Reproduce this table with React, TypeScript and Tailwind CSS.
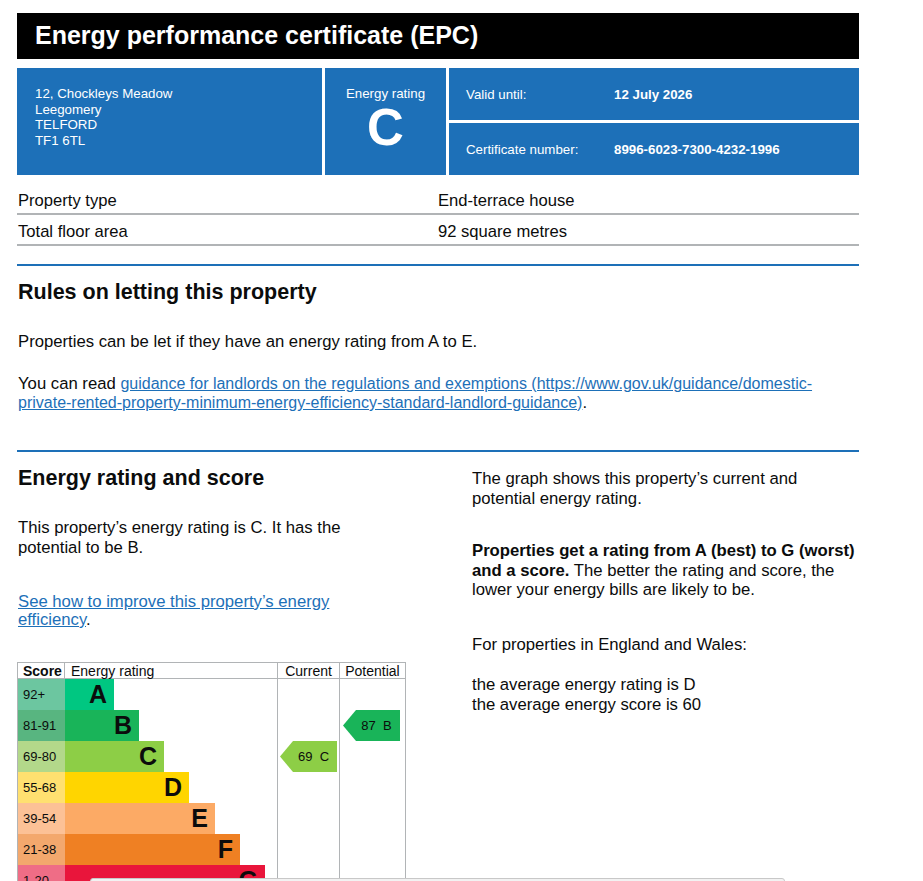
const font = { fontFamily: '"Liberation Sans", Arial, sans-serif' };

const bands = [
  { score: '92+', letter: 'A', bar: 'bg-[#00c781]', cell: 'bg-[#6cc6a0]', w: 'w-[49px]' },
  { score: '81-91', letter: 'B', bar: 'bg-[#19b459]', cell: 'bg-[#58b580]', w: 'w-[74px]' },
  { score: '69-80', letter: 'C', bar: 'bg-[#8dce46]', cell: 'bg-[#b3d88a]', w: 'w-[99px]' },
  { score: '55-68', letter: 'D', bar: 'bg-[#ffd500]', cell: 'bg-[#ffe070]', w: 'w-[124px]' },
  { score: '39-54', letter: 'E', bar: 'bg-[#fcaa65]', cell: 'bg-[#fcc196]', w: 'w-[150px]' },
  { score: '21-38', letter: 'F', bar: 'bg-[#ef8023]', cell: 'bg-[#f3a86d]', w: 'w-[175px]' },
  { score: '1-20', letter: 'G', bar: 'bg-[#e9153b]', cell: 'bg-[#ef6d86]', w: 'w-[200px]' },
];

function Arrow({ label, color }: { label: string; color: string }) {
  return (
    <div
      className={`flex h-[31px] w-[57px] items-center justify-center whitespace-pre pl-[10px] text-[13px] text-[#0b0c0c] [clip-path:polygon(13px_0,100%_0,100%_100%,13px_100%,0_50%)] ${color}`}
    >
      {label}
    </div>
  );
}

function RatingChart() {
  return (
    <div className="w-[389px] border border-[#b1b4b6] text-[#0b0c0c]">
      {/* header */}
      <div className="flex h-[16px] border-b border-[#b1b4b6] text-[14px] leading-[16px]">
        <div className="w-[47px] border-r border-[#b1b4b6] pl-[5px] font-bold">Score</div>
        <div className="w-[213px] border-r border-[#b1b4b6] pl-[6px]">Energy rating</div>
        <div className="w-[62px] border-r border-[#b1b4b6] text-center">Current</div>
        <div className="flex-1 text-center">Potential</div>
      </div>
      <div className="flex">
        <div className="w-[260px] border-r border-[#b1b4b6]">
          {bands.map((b) => (
            <div key={b.letter} className="flex h-[31px]">
              <div className={`flex w-[47px] items-center pl-[5px] text-[13px] ${b.cell}`}>{b.score}</div>
              <div
                className={`flex items-center justify-end pr-[7px] text-[25px] font-bold leading-none ${b.bar} ${b.w}`}
              >
                {b.letter}
              </div>
            </div>
          ))}
        </div>
        <div className="w-[62px] border-r border-[#b1b4b6] pt-[62px] pl-[2px]">
          <Arrow label="69  C" color="bg-[#8dce46]" />
        </div>
        <div className="flex-1 pt-[31px] pl-[3px]">
          <Arrow label="87  B" color="bg-[#19b459]" />
        </div>
      </div>
    </div>
  );
}

export default function App() {
  return (
    <div className="min-h-[1200px] bg-white text-[#0b0c0c]" style={font}>
      <div className="ml-[17px] w-[842px] pt-[13px]">
        {/* title bar */}
        <div className="flex h-[46px] items-center bg-black pl-[18px] text-[25px] font-bold text-white">
          Energy performance certificate (EPC)
        </div>

        {/* blue summary */}
        <div className="mt-[9px] flex h-[107px] gap-[3px] text-white">
          <div className="w-[305px] bg-[#1d70b8] pl-[18px] pt-[18px] text-[13.3px] leading-[15.5px]">
            <div>12, Chockleys Meadow</div>
            <div>Leegomery</div>
            <div>TELFORD</div>
            <div>TF1 6TL</div>
          </div>
          <div className="flex w-[121px] flex-col items-center bg-[#1d70b8] pt-[18px]">
            <div className="text-[13.3px] leading-[15px]">Energy rating</div>
            <div className="mt-[2px] text-[51px] font-bold leading-[50px]">C</div>
          </div>
          <div className="flex flex-1 flex-col gap-[3px]">
            <div className="flex flex-1 items-center bg-[#1d70b8] pl-[17px] pt-[2px] text-[13.3px]">
              <span className="w-[148px]">Valid until:</span>
              <span className="font-bold">12 July 2026</span>
            </div>
            <div className="flex flex-1 items-center bg-[#1d70b8] pl-[17px] pt-[2px] text-[13.3px]">
              <span className="w-[148px]">Certificate number:</span>
              <span className="font-bold">8996-6023-7300-4232-1996</span>
            </div>
          </div>
        </div>

        {/* property facts */}
        <div className="mt-[9px] text-[16.6px]">
          <div className="flex border-b-2 border-[#b1b4b6] pt-[7px] pb-[2px] leading-[20px]">
            <span className="w-[421px] pl-[1px]">Property type</span>
            <span>End-terrace house</span>
          </div>
          <div className="flex border-b-2 border-[#b1b4b6] pt-[7px] pb-[2px] leading-[20px]">
            <span className="w-[421px] pl-[1px]">Total floor area</span>
            <span>92 square metres</span>
          </div>
        </div>

        {/* rules on letting */}
        <div className="mt-[18px] border-t-2 border-[#1d70b8] pl-[1px]">
          <h2 className="mt-[14px] text-[21.5px] font-bold leading-[24px]">Rules on letting this property</h2>
          <p className="mt-[28px] text-[16.7px] leading-[19px]">
            Properties can be let if they have an energy rating from A to E.
          </p>
          <p className="mt-[23px] text-[16.7px] leading-[19px]">
            You can read{' '}
            <a className="text-[16px] text-[#1d70b8] underline" href="#">
              guidance for landlords on the regulations and exemptions (https://www.gov.uk/guidance/domestic-private-rented-property-minimum-energy-efficiency-standard-landlord-guidance)
            </a>
            .
          </p>
        </div>

        {/* energy rating and score */}
        <div className="mt-[38px] flex border-t-2 border-[#1d70b8]">
          <div className="w-[455px]">
            <div className="w-[360px] pl-[1px]">
              <h2 className="mt-[14px] text-[21.5px] font-bold leading-[24px]">Energy rating and score</h2>
              <p className="mt-[28px] text-[16.7px] leading-[20px]">
                This property’s energy rating is C. It has the potential to be B.
              </p>
              <p className="mt-[35px] text-[16.7px] leading-[18px]">
                <a className="text-[#1d70b8] underline" href="#">
                  See how to improve this property’s energy efficiency
                </a>
                .
              </p>
            </div>
            <div className="mt-[33px]">
              <RatingChart />
            </div>
          </div>
          <div className="flex-1 text-[16.7px] leading-[19.5px]">
            <p className="mt-[17px]">The graph shows this property’s current and potential energy rating.</p>
            <p className="mt-[33px]">
              <span className="font-bold">Properties get a rating from A (best) to G (worst) and a score.</span>{' '}
              The better the rating and score, the lower your energy bills are likely to be.
            </p>
            <p className="mt-[35px]">For properties in England and Wales:</p>
            <p className="mt-[21px]">
              the average energy rating is D
              <br />
              the average energy score is 60
            </p>
          </div>
        </div>
      </div>

      {/* bottom bar peeking in from the viewer */}
      <div className="fixed top-[878px] left-[90px] h-[12px] w-[695px] rounded-t-[3px] border border-[#c8c8c8] bg-[#f2f2f2]" />
    </div>
  );
}
